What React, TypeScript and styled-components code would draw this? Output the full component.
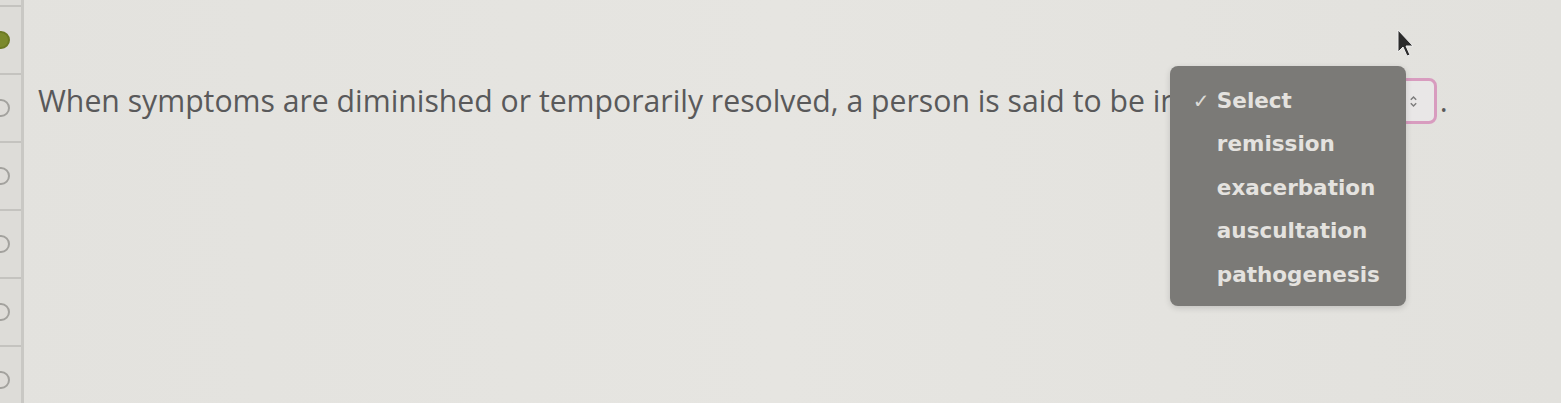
import * as React from "react"
import styled, { createGlobalStyle } from "styled-components"

const GlobalStyle = createGlobalStyle`
  html, body {
    margin: 0;
    padding: 0;
    background: #e4e3df;
  }
`

const options = ["Select", "remission", "exacerbation", "auscultation", "pathogenesis"]
const slots = [true, false, false, false, false, false]

const App = () => (
  <>
    <GlobalStyle />
    <Page>
      <Rail>
        {slots.map((done, i) => (
          <Slot key={i}>
            <Dot $done={done} />
          </Slot>
        ))}
      </Rail>
      <Main>
        <Question>
          When symptoms are diminished or temporarily resolved, a person is said to be in
          <SelectWrap>
            <SelectBox>
              <Arrows viewBox="0 0 10 16">
                <path d="M2 6 L5 3 L8 6" />
                <path d="M2 10 L5 13 L8 10" />
              </Arrows>
            </SelectBox>
            <Menu>
              {options.map((o, i) => (
                <Option key={o}>
                  {i === 0 && <Check>✓</Check>}
                  {o}
                </Option>
              ))}
            </Menu>
          </SelectWrap>
          .
        </Question>
      </Main>
      <Cursor viewBox="0 0 20 30">
        <path d="M2 2 L2 24 L7 19 L11 28 L14 27 L10 18 L17 18 Z" fill="#2b2b2b" stroke="#eee" strokeWidth="1" />
      </Cursor>
    </Page>
  </>
)

export default App

const Page = styled.div`
  position: relative;
  display: flex;
  height: 403px;
  overflow: hidden;
  background: linear-gradient(90deg, #e3e2de 0%, #e6e5e1 50%, #e2e1dd 100%);
`

const Rail = styled.div`
  width: 21px;
  flex-shrink: 0;
  padding-top: 5px;
  background: #dddcd8;
  border-right: 3px solid #c9c8c4;
  display: flex;
  flex-direction: column;
`

const Slot = styled.div`
  height: 66px;
  flex-shrink: 0;
  border-top: 2px solid #c4c3bf;
  display: flex;
  align-items: center;
`

const Dot = styled.span<{ $done: boolean }>`
  width: 18px;
  height: 18px;
  margin-left: -8px;
  border-radius: 50%;
  box-sizing: border-box;
  background: ${(p) => (p.$done ? "#7b8a2c" : "#dedcd8")};
  border: 2px solid ${(p) => (p.$done ? "#6c7a24" : "#a3a29e")};
`

const Main = styled.div`
  flex: 1;
  padding: 78px 0 0 14px;
`

const Question = styled.div`
  font-family: "Open Sans", sans-serif;
  font-size: 30.2px;
  line-height: 46px;
  color: #59595a;
  white-space: nowrap;
  display: flex;
  align-items: center;
`

const SelectWrap = styled.span`
  position: relative;
  display: inline-block;
  margin-left: 8px;
  margin-right: 3px;
`

const SelectBox = styled.span`
  display: flex;
  align-items: center;
  justify-content: flex-end;
  box-sizing: border-box;
  width: 250px;
  height: 46px;
  padding-right: 16px;
  border: 3px solid #d89cbf;
  border-radius: 8px;
  background: #e9e7e7;
`

const Arrows = styled.svg`
  width: 9px;
  height: 15px;
  fill: none;
  stroke: #7d7c7c;
  stroke-width: 1.6;
`

const Menu = styled.div`
  position: absolute;
  left: -17px;
  top: -12px;
  width: 236px;
  height: 240px;
  box-sizing: border-box;
  padding: 13px 0 0 47px;
  border-radius: 8px;
  background: #7b7a77;
  box-shadow: 0 2px 6px rgba(0, 0, 0, 0.15);
`

const Option = styled.div`
  position: relative;
  height: 43.5px;
  display: flex;
  align-items: center;
  font-family: "DejaVu Sans", sans-serif;
  font-weight: bold;
  font-size: 21.5px;
  color: #e4e2df;
`

const Check = styled.span`
  position: absolute;
  left: -24px;
  font-weight: bold;
  font-size: 20px;
  color: #dcdad7;
`

const Cursor = styled.svg`
  position: absolute;
  left: 1396px;
  top: 28px;
  width: 20px;
  height: 30px;
`
